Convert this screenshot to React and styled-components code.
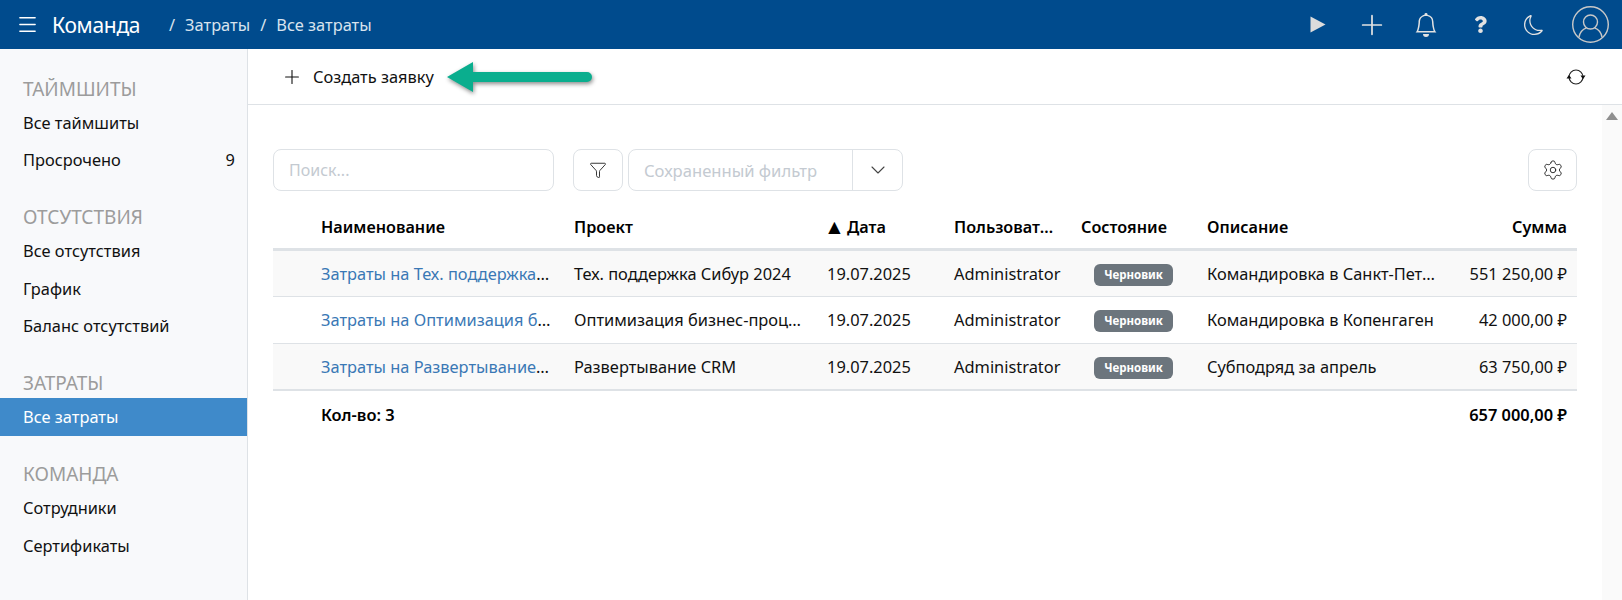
import React from 'react'
import styled, { createGlobalStyle } from 'styled-components'
import { Menu, Plus, ChevronDown, Settings, Funnel } from 'lucide-react'
import { BsBell, BsMoon } from 'react-icons/bs'
import { FaQuestion } from 'react-icons/fa'

const GlobalStyle = createGlobalStyle`
  html, body {
    margin: 0;
    height: 600px;
    overflow: hidden;
    background: #fff;
    font-family: "Noto Sans", "Open Sans", sans-serif;
    font-size: 16.4px;
    color: #111;
  }
  * { box-sizing: border-box; }
`

const Page = styled.div`
  width: 1622px;
  height: 600px;
  display: flex;
  flex-direction: column;
`

const TopBar = styled.header`
  height: 49px;
  flex: none;
  background: #004b8d;
  color: #fff;
  display: flex;
  align-items: center;
  padding-left: 16px;
`

const Brand = styled.span`
  margin-left: 13px;
  width: 117px;
  font-size: 21px;
  letter-spacing: -0.3px;
`

const Crumbs = styled.nav`
  display: flex;
  gap: 10px;
  font-size: 16.4px;
  color: #d8e3ee;
`

const TopIcons = styled.div`
  margin-left: auto;
  display: flex;
  align-items: center;
  padding-right: 3px;
  color: #e2e2e2;
`

const TopIcon = styled.span`
  width: ${(p) => p.$w || 54}px;
  display: flex;
  justify-content: center;
  align-items: center;
`

const Body = styled.div`
  flex: 1;
  display: flex;
  min-height: 0;
`

const Sidebar = styled.aside`
  width: 248px;
  flex: none;
  background: #f8f9fb;
  border-right: 1px solid #dee2e6;
  padding-top: 25.5px;
`

const Group = styled.div`
  margin-bottom: 24.5px;
`

const GroupTitle = styled.div`
  font-size: 19px;
  line-height: 29px;
  height: 29px;
  padding-left: 23px;
  color: #9c9c9c;
`

const NavItem = styled.div`
  height: 37.5px;
  display: flex;
  align-items: center;
  justify-content: space-between;
  padding: 0 12px 0 23px;
  background: ${(p) => (p.$active ? '#3f8aca' : 'transparent')};
  color: ${(p) => (p.$active ? '#fff' : '#111')};
`

const Main = styled.main`
  flex: 1;
  min-width: 0;
  display: flex;
  flex-direction: column;
`

const Toolbar = styled.div`
  height: 56px;
  flex: none;
  position: relative;
  display: flex;
  align-items: center;
  padding: 0 36px 0 33px;
  border-bottom: 1px solid #dee2e6;
`

const ToolLabel = styled.span`
  margin-left: 10px;
`

const Refresh = styled.span`
  margin-left: auto;
  display: flex;
`

const Callout = styled.svg`
  position: absolute;
  left: 190px;
  top: 13px;
  overflow: visible;
  filter: drop-shadow(1px 2px 2px rgba(0, 0, 0, 0.45));
`

const ContentWrap = styled.div`
  flex: 1;
  display: flex;
  min-height: 0;
`

const Content = styled.div`
  flex: 1;
  min-width: 0;
  padding: 44px 25px 0;
`

const Scrollbar = styled.div`
  width: 20px;
  flex: none;
  background: #fafafa;
  display: flex;
  justify-content: center;
  padding-top: 7px;
`

const ScrollArrow = styled.div`
  width: 0;
  height: 0;
  border-left: 6px solid transparent;
  border-right: 6px solid transparent;
  border-bottom: 8px solid #8f8f8f;
`

const Filters = styled.div`
  display: flex;
  height: 42px;
`

const Field = styled.div`
  width: ${(p) => p.$w}px;
  height: 42px;
  display: flex;
  align-items: center;
  border: 1px solid #dee2e6;
  border-radius: 8px;
  padding-left: 15px;
  color: #c4cad1;
  font-size: 16px;
`

const IconButton = styled.button`
  width: ${(p) => p.$w || 49}px;
  height: 42px;
  margin-left: ${(p) => p.$ml || 0};
  display: flex;
  align-items: center;
  justify-content: center;
  padding: 0;
  background: #fff;
  border: 1px solid #dee2e6;
  border-radius: 8px;
  color: #222;
`

const SavedFilter = styled(Field)`
  margin-left: 5px;
  padding-right: 0;
  font-size: 16.6px;
`

const SavedCaret = styled.span`
  margin-left: auto;
  width: 50px;
  height: 100%;
  display: flex;
  align-items: center;
  justify-content: center;
  border-left: 1px solid #dee2e6;
  color: #444;
`

const Table = styled.table`
  width: 1304px;
  margin-top: 16px;
  border-collapse: collapse;
  table-layout: fixed;
`

const Th = styled.th`
  height: 42px;
  padding: 0 8px;
  font-weight: 600;
  font-size: 16.2px;
  text-align: ${(p) => p.$align || 'left'};
  white-space: nowrap;
  overflow: hidden;
  text-overflow: ellipsis;
  border-bottom: 3px solid #dee2e6;
  color: #000;
  padding-right: ${(p) => (p.$align === 'right' ? '10px' : '12px')};
`

const SortMark = styled.span`
  font-size: 21px;
  line-height: 0;
  margin: 0 -2px 0 -3px;
  vertical-align: -1px;
`

const Tr = styled.tr`
  background: ${(p) => (p.$shade ? '#f9f9f9' : '#fff')};
  border-bottom: ${(p) => (p.$last ? '2px' : '1px')} solid #dee2e6;
`

const Td = styled.td`
  height: 47px;
  padding: 0 8px;
  padding-right: ${(p) => (p.$align === 'right' ? '10px' : '12px')};
  text-align: ${(p) => p.$align || 'left'};
  white-space: nowrap;
  overflow: hidden;
  text-overflow: ellipsis;
`

const LinkCell = styled(Td)`
  padding-right: 15px;
`

const RowLink = styled.a`
  color: #3a78b5;
  text-decoration: none;
`

const Badge = styled.span`
  display: inline-block;
  height: 22px;
  line-height: 22px;
  width: 79px;
  text-align: center;
  border-radius: 6px;
  background: #6c757d;
  color: #fff;
  font-size: 11.5px;
  font-weight: 700;
`

const StateCell = styled(Td)`
  padding: 0 13px 0 8px;
  text-align: center;
`

const FootCell = styled.td`
  height: 48px;
  padding: 0 8px;
  padding-right: ${(p) => (p.$align === 'right' ? '10px' : '8px')};
  font-weight: 600;
  color: #000;
  text-align: ${(p) => p.$align || 'left'};
`

const nav = [
  { title: 'ТАЙМШИТЫ', items: [{ label: 'Все таймшиты' }, { label: 'Просрочено', count: 9 }] },
  { title: 'ОТСУТСТВИЯ', items: [{ label: 'Все отсутствия' }, { label: 'График' }, { label: 'Баланс отсутствий' }] },
  { title: 'ЗАТРАТЫ', items: [{ label: 'Все затраты', active: true }] },
  { title: 'КОМАНДА', items: [{ label: 'Сотрудники' }, { label: 'Сертификаты' }] },
]

const rows = [
  { name: 'Затраты на Тех. поддержка Сибур 2024', project: 'Тех. поддержка Сибур 2024', desc: 'Командировка в Санкт-Петербург', sum: '551 250,00 ₽', shade: true },
  { name: 'Затраты на Оптимизация бизнес-процессов', project: 'Оптимизация бизнес-процессов', desc: 'Командировка в Копенгаген', sum: '42 000,00 ₽' },
  { name: 'Затраты на Развертывание CRM', project: 'Развертывание CRM', desc: 'Субподряд за апрель', sum: '63 750,00 ₽', shade: true, last: true },
]

const Avatar = () => (
  <svg width="37" height="37" viewBox="0 0 37 37" fill="none" stroke="#c8c8c8" strokeWidth="1.4">
    <circle cx="18.5" cy="18.5" r="17.8" />
    <circle cx="18.5" cy="16" r="7" />
    <path d="M7 31c1-5.5 4-8 7.5-9.2M30 31c-1-5.5-4-8-7.5-9.2" />
  </svg>
)

const RefreshIcon = () => (
  <svg width="20" height="20" viewBox="0 0 20 20" fill="none" stroke="#222" strokeWidth="1.1">
    <circle cx="10" cy="10" r="7" />
    <path d="M0.5 11.5h5L3 7.8zM14.5 8.5h5L17 12.2z" fill="#111" stroke="none" />
  </svg>
)

const App = () => (
  <Page>
    <GlobalStyle />
    <TopBar>
      <Menu size={23} strokeWidth={1.4} />
      <Brand>Команда</Brand>
      <Crumbs>
        <span>/</span>
        <span>Затраты</span>
        <span>/</span>
        <span>Все затраты</span>
      </Crumbs>
      <TopIcons>
        <TopIcon>
          <svg width="16" height="17" viewBox="0 0 16 17"><path d="M0.5 0.5 L15.5 8.5 L0.5 16.5 Z" fill="#dcdcdc" /></svg>
        </TopIcon>
        <TopIcon><Plus size={32} strokeWidth={1.3} /></TopIcon>
        <TopIcon><BsBell size={24} /></TopIcon>
        <TopIcon><FaQuestion size={17} /></TopIcon>
        <TopIcon><BsMoon size={20} /></TopIcon>
        <TopIcon $w={58}><Avatar /></TopIcon>
      </TopIcons>
    </TopBar>
    <Body>
      <Sidebar>
        {nav.map((g) => (
          <Group key={g.title}>
            <GroupTitle>{g.title}</GroupTitle>
            {g.items.map((it) => (
              <NavItem key={it.label} $active={it.active}>
                <span>{it.label}</span>
                {it.count && <span>{it.count}</span>}
              </NavItem>
            ))}
          </Group>
        ))}
      </Sidebar>
      <Main>
        <Toolbar>
          <Plus size={22} strokeWidth={1.2} />
          <ToolLabel>Создать заявку</ToolLabel>
          <Refresh><RefreshIcon /></Refresh>
          <Callout width="155" height="32" viewBox="0 0 155 32">
            <path d="M9 15 L35 0 L35 10 L149 10 A5 5 0 0 1 149 20 L35 20 L35 30 Z" fill="#0aae8e" />
          </Callout>
        </Toolbar>
        <ContentWrap>
          <Content>
            <Filters>
              <Field $w={281}>Поиск...</Field>
              <IconButton $ml="19px" $w={50}><Funnel size={18} strokeWidth={1.2} /></IconButton>
              <SavedFilter $w={275}>
                Сохраненный фильтр
                <SavedCaret><ChevronDown size={24} strokeWidth={1.1} /></SavedCaret>
              </SavedFilter>
              <IconButton $ml="auto"><Settings size={22} strokeWidth={1} /></IconButton>
            </Filters>
            <Table>
              <colgroup>
                <col style={{ width: 40 }} />
                <col style={{ width: 253 }} />
                <col style={{ width: 253 }} />
                <col style={{ width: 127 }} />
                <col style={{ width: 127 }} />
                <col style={{ width: 126 }} />
                <col style={{ width: 252 }} />
                <col style={{ width: 126 }} />
              </colgroup>
              <thead>
                <tr>
                  <Th />
                  <Th>Наименование</Th>
                  <Th>Проект</Th>
                  <Th><SortMark>▲</SortMark> Дата</Th>
                  <Th>Пользователь</Th>
                  <Th>Состояние</Th>
                  <Th>Описание</Th>
                  <Th $align="right">Сумма</Th>
                </tr>
              </thead>
              <tbody>
                {rows.map((r) => (
                  <Tr key={r.name} $shade={r.shade} $last={r.last}>
                    <Td />
                    <LinkCell><RowLink>{r.name}</RowLink></LinkCell>
                    <Td>{r.project}</Td>
                    <Td>19.07.2025</Td>
                    <Td>Administrator</Td>
                    <StateCell><Badge>Черновик</Badge></StateCell>
                    <Td>{r.desc}</Td>
                    <Td $align="right">{r.sum}</Td>
                  </Tr>
                ))}
              </tbody>
              <tfoot>
                <tr>
                  <FootCell />
                  <FootCell>Кол-во: 3</FootCell>
                  <FootCell colSpan={5} />
                  <FootCell $align="right">657 000,00 ₽</FootCell>
                </tr>
              </tfoot>
            </Table>
          </Content>
          <Scrollbar><ScrollArrow /></Scrollbar>
        </ContentWrap>
      </Main>
    </Body>
  </Page>
)

export default App
